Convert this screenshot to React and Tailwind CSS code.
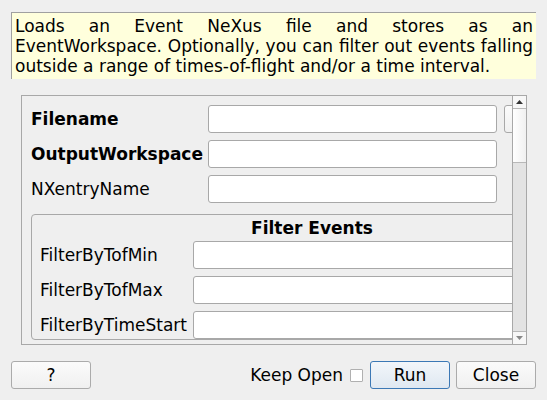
import React from 'react';

// Ô nhập liệu kiểu Qt
function Field({ className = '' }) {
  return <div className={`h-[28px] bg-white border border-[#a8a8a8] rounded-[3px] ${className}`}></div>;
}

// Nút bấm kiểu Qt Fusion
function Button({ children, primary }) {
  return (
    <div
      className={`w-[80px] h-[28px] flex items-center justify-center rounded-[3px] border ${
        primary
          ? 'border-[#3b78b5] bg-gradient-to-b from-[#f2f6fa] to-[#dfe8f1]'
          : 'border-[#ababab] bg-gradient-to-b from-[#fbfbfb] to-[#f0f0f0]'
      }`}
    >
      {children}
    </div>
  );
}

const mainRows = [
  { label: 'Filename', bold: true, browse: true },
  { label: 'OutputWorkspace', bold: true },
  { label: 'NXentryName' }
];

const filterRows = ['FilterByTofMin', 'FilterByTofMax', 'FilterByTimeStart'];

export default function App() {
  return (
    <div className="w-[547px] h-[400px] bg-[#efefef] text-black text-[17px] leading-[20px] font-['DejaVu_Sans',sans-serif] overflow-hidden">
      {/* Mô tả thuật toán */}
      <div className="pt-[12px] px-[11px]">
        <div className="h-[67px] bg-[#ffffdc] border-l border-t border-[#a0a0a0] pl-[3px] pr-[3px] pt-[3px] text-justify">
          Loads an Event NeXus file and stores as an EventWorkspace. Optionally, you can filter out events falling
          outside a range of times-of-flight and/or a time interval.
        </div>
      </div>

      {/* Vùng cuộn chứa các thuộc tính */}
      <div className="mt-[16px] ml-[21px] w-[506px] h-[250px] border border-[#a8a8a8] flex">
        <div className="w-[490px] h-[248px] overflow-hidden">
          <div className="w-[580px] pl-[9px] pt-[9px] flex flex-col gap-[7px]">
            {mainRows.map(row => (
              <div key={row.label} className="flex items-center">
                <div className={`w-[177px] ${row.bold ? 'font-bold' : ''}`}>{row.label}</div>
                <Field className="w-[289px]" />
                {row.browse && <Field className="ml-[7px] w-[80px] bg-gradient-to-b from-[#fbfbfb] to-[#f0f0f0]" />}
              </div>
            ))}
          </div>
          <div className="ml-[9px] mt-[11px] w-[562px] border border-[#a8a8a8] rounded-[4px] pt-[3px] pl-[8px] pr-[8px]">
            <div className="font-bold text-center">Filter Events</div>
            <div className="mt-[3px] flex flex-col gap-[7px]">
              {filterRows.map(label => (
                <div key={label} className="flex items-center">
                  <div className="w-[153px]">{label}</div>
                  <Field className="flex-1" />
                </div>
              ))}
            </div>
          </div>
        </div>

        {/* Thanh cuộn */}
        <div className="w-[14px] h-[248px] border-l border-[#a8a8a8] flex flex-col bg-[#e3e3e3]">
          <div className="h-[13px] bg-[#f7f7f7] border-b border-[#b8b8b8] flex items-center justify-center">
            <svg width="7" height="4" viewBox="0 0 7 4"><path d="M0 4 L3.5 0 L7 4 Z" fill="#333" /></svg>
          </div>
          <div className="h-[54px] bg-gradient-to-r from-[#ffffff] to-[#f0f0f0] border-b border-[#b8b8b8]"></div>
          <div className="flex-1"></div>
          <div className="h-[13px] bg-[#f7f7f7] border-t border-[#b8b8b8] flex items-center justify-center">
            <svg width="7" height="4" viewBox="0 0 7 4"><path d="M0 0 L7 0 L3.5 4 Z" fill="#888" /></svg>
          </div>
        </div>
      </div>

      {/* Thanh nút dưới */}
      <div className="mt-[16px] px-[11px] flex items-center">
        <Button>?</Button>
        <div className="flex-1"></div>
        <span>Keep Open</span>
        <div className="ml-[7px] w-[13px] h-[13px] bg-white border border-[#b0b0b0] rounded-[1px]"></div>
        <div className="ml-[7px]">
          <Button primary>Run</Button>
        </div>
        <div className="ml-[6px]">
          <Button>Close</Button>
        </div>
      </div>
    </div>
  );
}
